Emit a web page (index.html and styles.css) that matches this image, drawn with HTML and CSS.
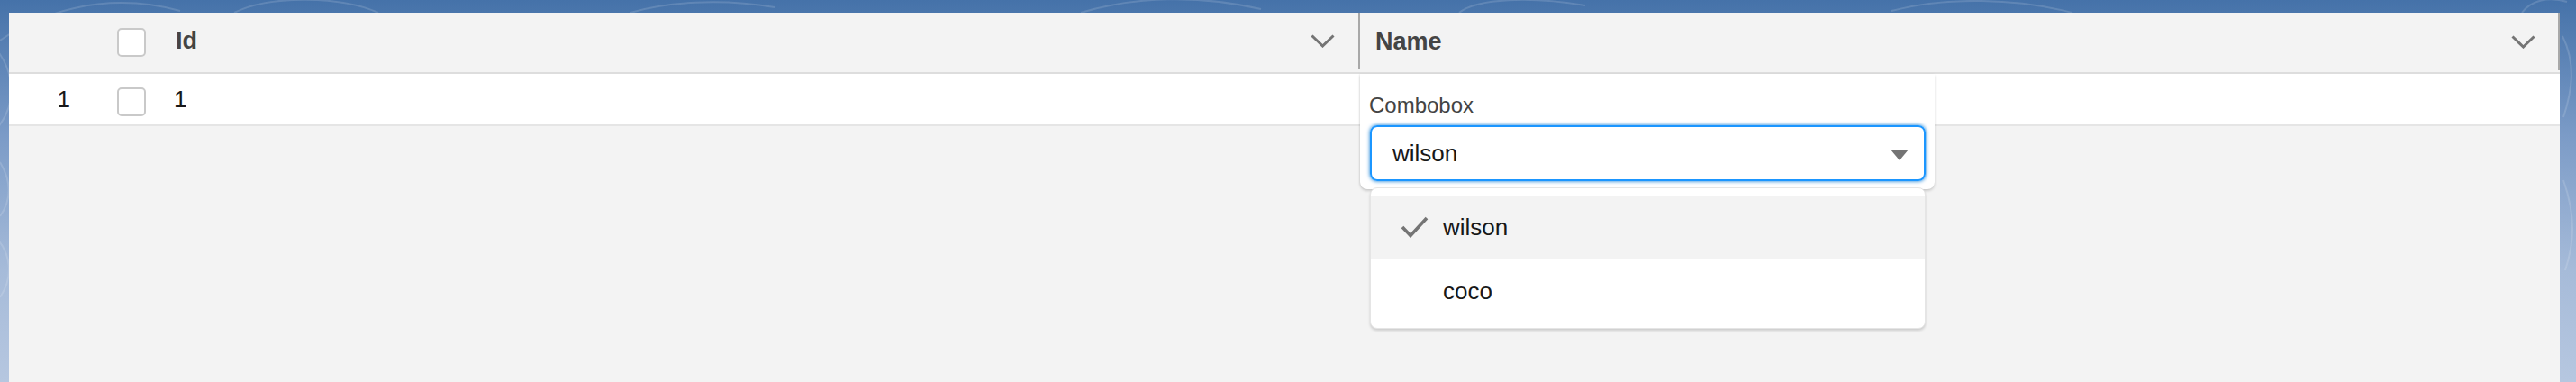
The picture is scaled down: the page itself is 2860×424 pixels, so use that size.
FILE: index.html
```html
<!DOCTYPE html>
<html>
<head>
<meta charset="utf-8">
<link rel="stylesheet" href="styles.css">
</head>
<body>
<svg class="contours" width="2860" height="424" viewBox="0 0 2860 424" aria-hidden="true">
  <g fill="none" stroke="#ffffff" stroke-opacity="0.14" stroke-width="2">
    <path d="M-20 60 C 40 10, 120 -10, 200 12"/>
    <path d="M-10 150 C 30 110, 10 60, -20 40"/>
    <path d="M0 240 C 14 220, 12 200, 0 180"/>
    <path d="M0 330 C 20 300, 6 270, -10 260"/>
    <path d="M260 14 C 300 -6, 380 -4, 420 14"/>
    <path d="M700 14 C 740 2, 800 -2, 860 8"/>
    <path d="M1200 14 C 1260 -4, 1330 -6, 1400 10"/>
    <path d="M1620 14 C 1640 -2, 1700 -4, 1760 6"/>
    <path d="M2100 12 C 2160 -4, 2240 -2, 2300 14"/>
    <path d="M2800 14 C 2810 0, 2830 -4, 2850 2"/>
    <path d="M2845 40 C 2860 70, 2856 100, 2846 130"/>
    <path d="M2846 200 C 2860 240, 2858 270, 2848 300"/>
  </g>
</svg>
<div class="panel">
  <div class="header">
    <div class="cell num"></div>
    <div class="cell check"><span class="checkbox"></span></div>
    <div class="cell col id-col">
      <span class="title">Id</span>
      <svg class="chev" width="27" height="15" viewBox="0 0 27 15"><polyline points="1.5,1.5 13.5,13 25.5,1.5" fill="none" stroke="#747474" stroke-width="3"/></svg>
    </div>
    <div class="cell col name-col">
      <span class="title">Name</span>
      <svg class="chev" width="27" height="15" viewBox="0 0 27 15"><polyline points="1.5,1.5 13.5,13 25.5,1.5" fill="none" stroke="#747474" stroke-width="3"/></svg>
    </div>
  </div>
  <div class="row">
    <div class="cell num">1</div>
    <div class="cell check"><span class="checkbox row-box"></span></div>
    <div class="cell col id-col"><span class="val">1</span></div>
    <div class="cell col name-col"></div>
  </div>

  <div class="popover">
    <label class="label">Combobox</label>
    <div class="input">
      <span class="input-text">wilson</span>
      <svg class="tri" width="20" height="12" viewBox="0 0 20 12"><polygon points="0,0 20,0 10,12" fill="#747474"/></svg>
    </div>
  </div>

  <div class="listbox">
    <div class="option active">
      <svg class="tick" width="31" height="24" viewBox="0 0 31 24"><polyline points="2,12 11,21.5 29,2" fill="none" stroke="#747474" stroke-width="3.6"/></svg>
      <span class="opt-text">wilson</span>
    </div>
    <div class="option">
      <span class="tick-space"></span>
      <span class="opt-text">coco</span>
    </div>
  </div>
</div>
</body>
</html>
```
FILE: styles.css
```css
html, body {
  margin: 0;
  padding: 0;
}
body {
  width: 2860px;
  height: 424px;
  overflow: hidden;
  background: linear-gradient(180deg, #4572a9 0px, #7b9bc7 150px, #a6bbd9 300px, #b6c7e0 424px);
  font-family: "Liberation Sans", Arial, sans-serif;
  position: relative;
}
.contours {
  position: absolute;
  left: 0;
  top: 0;
}
.panel {
  position: relative;
  margin: 14px 18px 0 10px;
  height: 410px;
  background: #f3f3f3;
}
.header {
  display: flex;
  height: 66px;
  border-bottom: 2px solid #dddddd;
  background: #f3f3f3;
}
.row {
  display: flex;
  height: 56px;
  border-bottom: 2px solid #e5e5e5;
  background: #ffffff;
}
.cell {
  display: flex;
  align-items: center;
  box-sizing: border-box;
}
.num {
  width: 110px;
  justify-content: flex-end;
  padding-right: 42px;
  font-size: 26px;
  color: #181818;
}
.check {
  width: 65px;
  padding-left: 10px;
}
.checkbox {
  display: block;
  width: 32px;
  height: 32px;
  box-sizing: border-box;
  border: 2px solid #c9c9c9;
  border-radius: 5px;
  background: #ffffff;
}
.row-box {
  margin-top: 6px;
}
.col {
  justify-content: space-between;
}
.id-col {
  width: 1325px;
  padding-left: 10px;
  padding-right: 26px;
}
.header .id-col {
  border-right: 2px solid #a8a8a8;
  height: 63px;
  align-self: flex-start;
}
.name-col {
  flex: 1;
  padding-left: 17px;
  padding-right: 27px;
}
.header .name-col {
  border-right: 2px solid #a8a8a8;
  height: 64px;
  align-self: flex-start;
  padding-right: 25px;
}
.title {
  font-size: 27px;
  font-weight: bold;
  color: #444444;
}
.val {
  font-size: 26px;
  color: #181818;
  margin-left: -2px;
}
.chev {
  display: block;
}

.popover {
  position: absolute;
  left: 1500px;
  top: 68px;
  width: 638px;
  height: 128px;
  box-sizing: border-box;
  padding: 20px 10px 0 11px;
  background: #ffffff;
  border-radius: 0 0 8px 8px;
  box-shadow: 0 2px 3px rgba(0, 0, 0, 0.16), -1px 0 2px rgba(0, 0, 0, 0.06);
  display: flex;
  flex-direction: column;
}
.label {
  font-size: 24px;
  line-height: 30px;
  color: #444444;
  margin-left: -1px;
}
.input {
  margin-top: 7px;
  height: 62px;
  box-sizing: border-box;
  border: 2px solid #1b96ff;
  border-radius: 8px;
  box-shadow: 0 0 4px #0176d3;
  display: flex;
  align-items: center;
  justify-content: space-between;
  padding: 0 17px 0 23px;
}
.input-text {
  font-size: 26px;
  color: #181818;
}
.tri {
  display: block;
  margin-top: 3px;
}

.listbox {
  position: absolute;
  left: 1511px;
  top: 194px;
  width: 617px;
  height: 157px;
  box-sizing: border-box;
  padding: 8px 0 7px;
  background: #ffffff;
  border: 1px solid #e5e5e5;
  border-radius: 8px;
  box-shadow: 0 2px 3px rgba(0, 0, 0, 0.16);
}
.option {
  display: flex;
  align-items: center;
  height: 71px;
  padding-left: 33px;
}
.option.active {
  background: #f3f3f3;
}
.tick {
  display: block;
  width: 31px;
  height: 24px;
  margin-right: 16px;
  margin-top: -2px;
}
.tick-space {
  display: block;
  width: 31px;
  margin-right: 16px;
}
.opt-text {
  font-size: 26px;
  color: #181818;
}
```
